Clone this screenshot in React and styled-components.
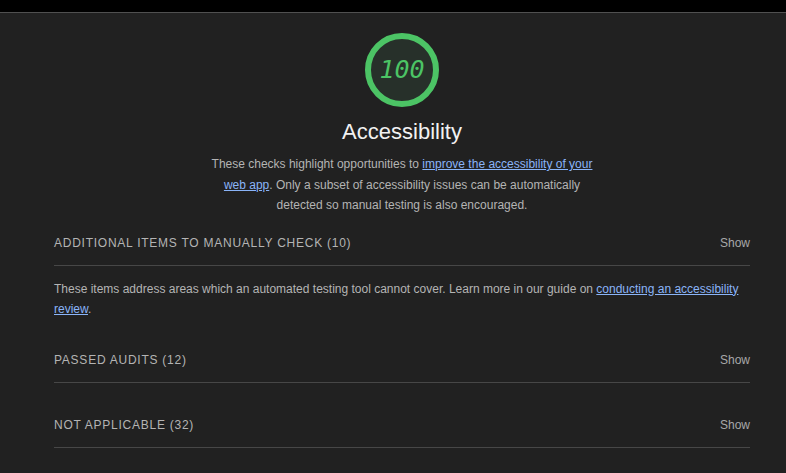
import React from "react";
import styled, { createGlobalStyle } from "styled-components";

const GlobalStyle = createGlobalStyle`
  html, body {
    margin: 0;
    padding: 0;
    background: #212121;
  }
  body {
    font-family: "Liberation Sans", Arial, sans-serif;
  }
`;

const Page = styled.div`
  min-height: 100vh;
  background: #212121;
`;

const TopBar = styled.div`
  height: 12px;
  background: #000;
  border-bottom: 1px solid #505050;
`;

const Content = styled.div`
  padding: 20px 36px 0 54px;
  display: flex;
  flex-direction: column;
`;

const Header = styled.div`
  display: flex;
  flex-direction: column;
  align-items: center;
`;

const Gauge = styled.div`
  box-sizing: border-box;
  width: 74px;
  height: 74px;
  border-radius: 50%;
  border: 6px solid #4cc465;
  background: #27302a;
  display: flex;
  align-items: center;
  justify-content: center;
  color: #4cc465;
  font-family: "DejaVu Sans Mono", monospace;
  font-style: italic;
  font-size: 25px;
  padding-bottom: 1px;
`;

const Title = styled.h1`
  margin: 12px 0 0;
  font-size: 22px;
  line-height: 26px;
  font-weight: normal;
  color: #f2f2f2;
`;

const Description = styled.p`
  margin: 9px 0 0;
  max-width: 392px;
  text-align: center;
  font-size: 12px;
  line-height: 20.5px;
  color: #b4b4b4;
`;

const Link = styled.a`
  color: #8ab4f8;
  text-decoration: underline;
`;

const Group = styled.section`
  margin-top: ${(p) => (p.$first ? "19px" : "33.5px")};
`;

const GroupHeader = styled.div`
  display: flex;
  align-items: center;
  justify-content: space-between;
  padding-bottom: 14px;
  border-bottom: 1px solid #474747;
  line-height: 16px;
`;

const GroupTitle = styled.span`
  font-size: 12px;
  letter-spacing: 0.75px;
  text-transform: uppercase;
  color: #b4b4b4;
`;

const Toggle = styled.span`
  font-size: 12px;
  color: #a8a8a8;
`;

const GroupText = styled.p`
  margin: 13px 0 0;
  font-size: 12px;
  line-height: 20px;
  color: #b4b4b4;
`;

const groups = [
  {
    title: "Additional items to manually check",
    count: 10,
    text: (
      <>
        These items address areas which an automated testing tool cannot
        cover. Learn more in our guide on{" "}
        <Link href="#">conducting an accessibility review</Link>.
      </>
    ),
  },
  { title: "Passed audits", count: 12 },
  { title: "Not applicable", count: 32 },
];

export default function App() {
  return (
    <Page>
      <GlobalStyle />
      <TopBar />
      <Content>
        <Header>
          <Gauge>100</Gauge>
          <Title>Accessibility</Title>
          <Description>
            These checks highlight opportunities to{" "}
            <Link href="#">improve the accessibility of your web app</Link>.
            Only a subset of accessibility issues can be automatically detected
            so manual testing is also encouraged.
          </Description>
        </Header>
        {groups.map((g, i) => (
          <Group key={g.title} $first={i === 0}>
            <GroupHeader>
              <GroupTitle>
                {g.title} ({g.count})
              </GroupTitle>
              <Toggle>Show</Toggle>
            </GroupHeader>
            {g.text && <GroupText>{g.text}</GroupText>}
          </Group>
        ))}
      </Content>
    </Page>
  );
}
